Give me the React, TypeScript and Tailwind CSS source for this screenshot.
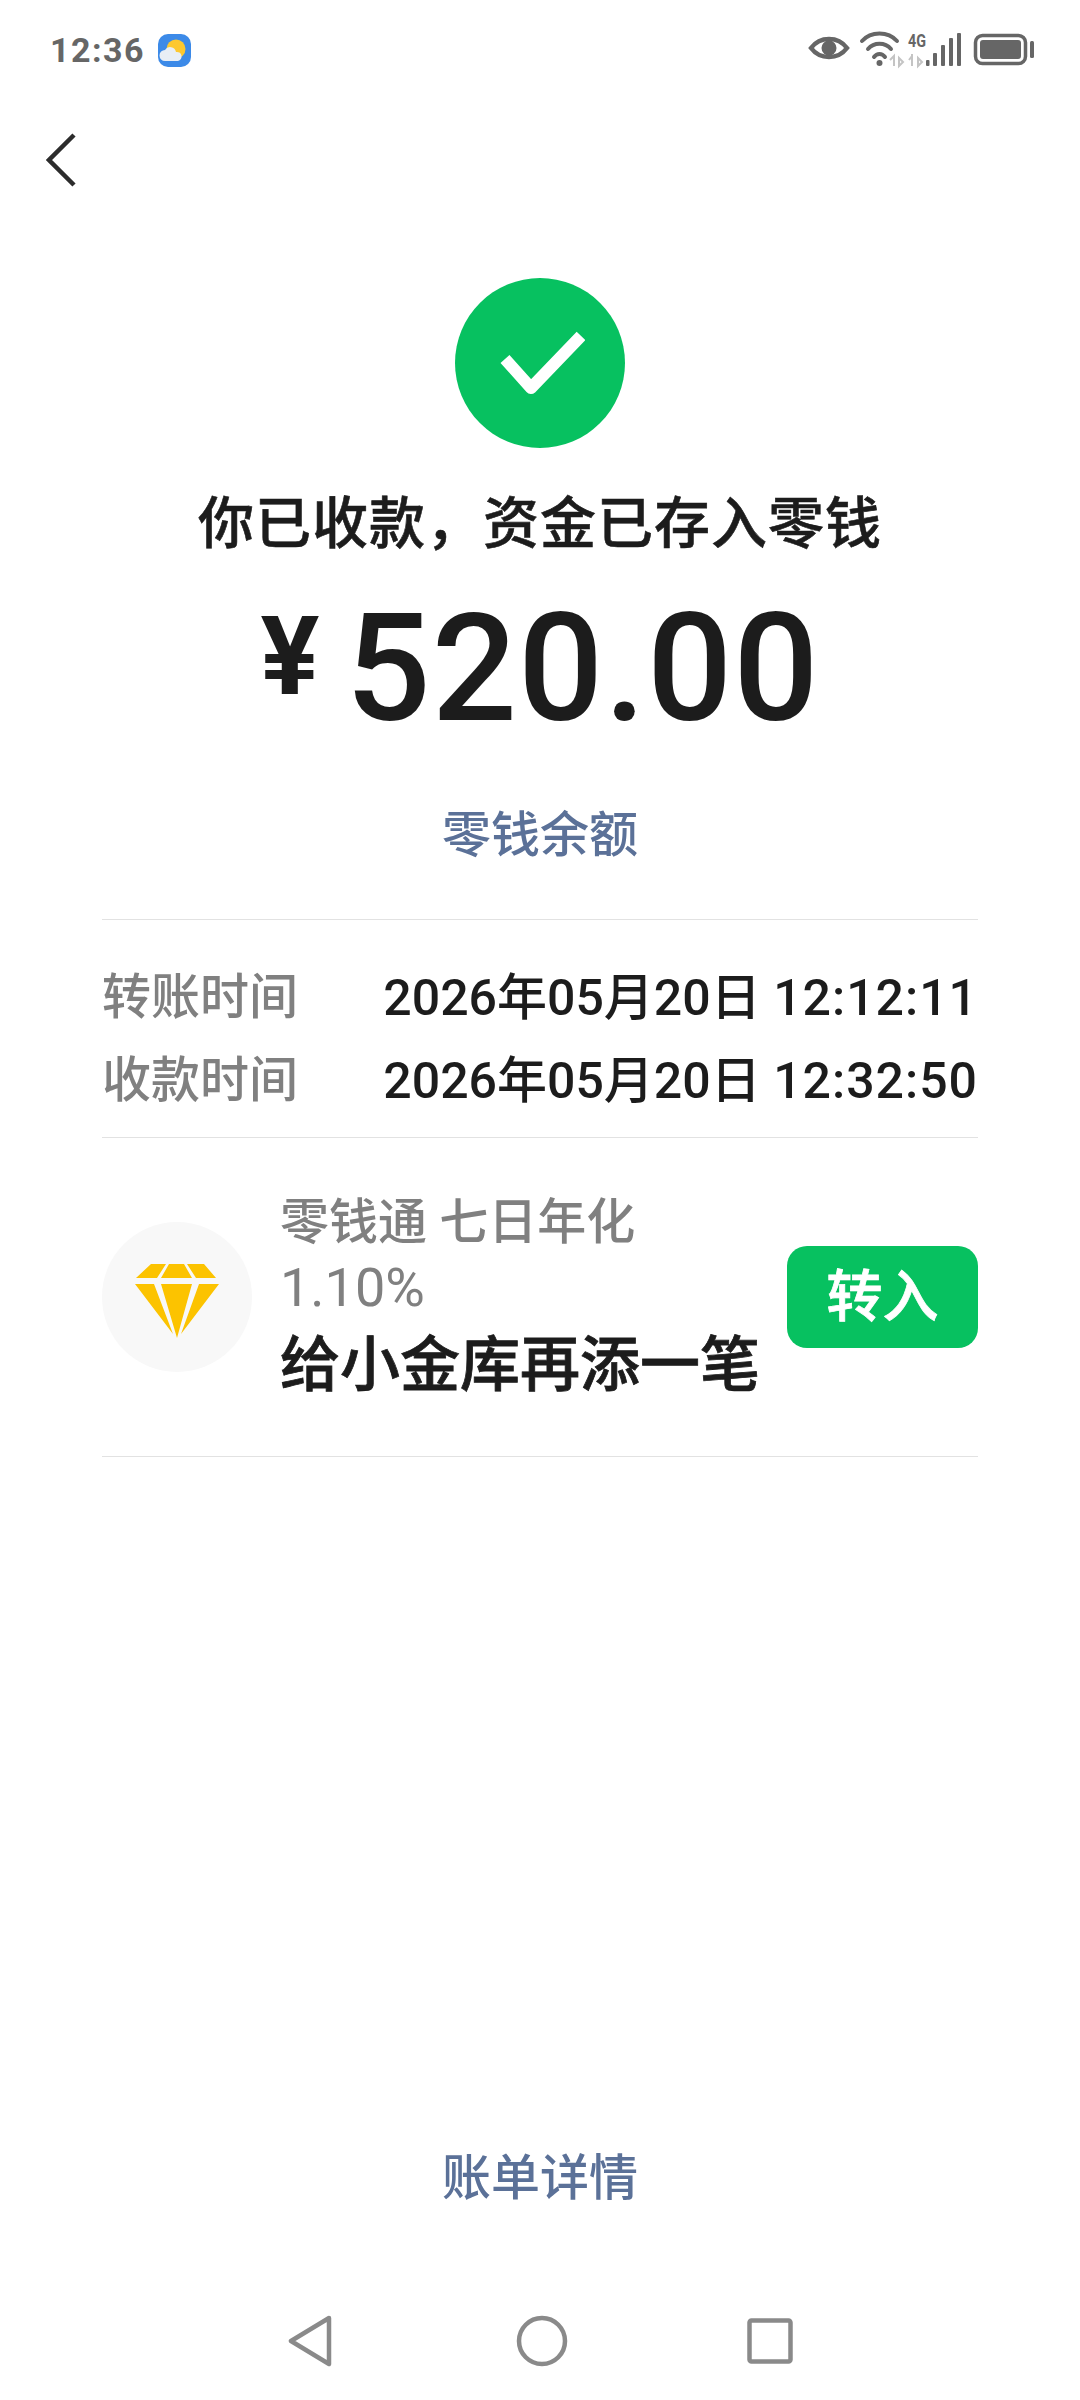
import React from "react";

const cjk = "font-['Roboto','Noto_Sans_CJK_SC',sans-serif]";

const StatusIcons = () => (
    <svg width="228" height="40" viewBox="0 0 228 40" fill="none">
        {/* eye */}
        <path d="M3 18 C12 6 30 6 39 18 C30 30 12 30 3 18 Z" stroke="#666" strokeWidth="4.5" />
        <circle cx="21" cy="18" r="7.5" fill="#666" />
        {/* wifi */}
        <path d="M54 11 C63 1 80 1 89 11" stroke="#666" strokeWidth="4" strokeLinecap="round" />
        <path d="M60 19 C66 12 77 12 83 19" stroke="#666" strokeWidth="4" strokeLinecap="round" />
        <path d="M66 27 C69 23 74 23 77 27" stroke="#666" strokeWidth="4" strokeLinecap="round" />
        <circle cx="71.5" cy="33" r="3" fill="#666" />
        <path d="M82 30 l4 -4 v10 M91 28 v8 l4 -4 z" stroke="#c4c4c4" strokeWidth="2" />
        {/* signal */}
        <text x="100" y="17" fill="#666" fontSize="18" fontWeight="700" fontFamily="Roboto" textLength="18" lengthAdjust="spacingAndGlyphs">4G</text>
        <path d="M104 26 l-3 4 M104 24 v12 M110 28 v8 l4 -4 z" stroke="#c4c4c4" strokeWidth="2" />
        <rect x="118" y="30" width="3.5" height="6" rx="1" fill="#666" />
        <rect x="125" y="23" width="4" height="13" rx="1" fill="#666" />
        <rect x="133" y="15" width="4" height="21" rx="1" fill="#666" />
        <rect x="141" y="8" width="4" height="28" rx="1" fill="#666" />
        <rect x="149" y="3" width="4" height="33" rx="1" fill="#666" />
        {/* battery */}
        <rect x="167.5" y="5.5" width="50" height="28" rx="7" stroke="#666" strokeWidth="3.5" />
        <rect x="172" y="10" width="41" height="19" rx="3" fill="#666" />
        <rect x="222" y="11" width="4" height="17" rx="1.5" fill="#666" />
    </svg>
);

const Diamond = () => (
    <svg width="84" height="74" viewBox="0 0 84 74" className="mt-[8px]">
        <path d="M16 0 H31 L22 14 H1 Z M34 0 H49 L57 14 H26 Z M52 0 H69 L81 14 H61 Z" fill="#fcc300" />
        <path d="M0 20 H19 L38 70 Z M26 20 H57 L42 74 Z M64 20 H84 L46 70 Z" fill="#fcc300" />
    </svg>
);

const TimeRow = ({ label, date, time }: { label: string; date: string; time: string }) => (
    <div className="flex h-[83px] items-center justify-between">
        <span className="text-[49px] leading-none font-medium text-[#808080]">{label}</span>
        <span className="text-[50px] leading-none font-medium whitespace-pre text-[#1c1c1c]">
            {date} <span className="tracking-[1px]">{time}</span>
        </span>
    </div>
);

export default function App() {
    return (
        <div className={`flex h-[2400px] w-[1080px] flex-col bg-white ${cjk}`}>
            {/* Status bar */}
            <div className="flex h-[100px] items-center justify-between pr-[44px] pl-[50px]">
                <div className="flex items-center gap-[13px]">
                    <span className="text-[34px] leading-none font-bold tracking-[1.5px] text-[#666]">12:36</span>
                    <svg width="33" height="33" viewBox="0 0 33 33">
                        <rect width="33" height="33" rx="10" fill="#3c8ae8" />
                        <circle cx="18" cy="15" r="9.5" fill="#fdc82f" />
                        <path d="M7 27 a5.5 5.5 0 0 1 0 -11 a6 6 0 0 1 11 2 a4.5 4.5 0 0 1 2 9 Z" fill="#e8eef5" />
                    </svg>
                </div>
                <StatusIcons />
            </div>

            {/* Back */}
            <div className="flex h-[120px] items-center pl-[46px]">
                <svg width="32" height="56" viewBox="0 0 32 56" fill="none">
                    <path d="M28 3 L3 28 L28 53" stroke="#2c2c2c" strokeWidth="4.5" />
                </svg>
            </div>

            {/* Result */}
            <div className="flex flex-col items-center pt-[58px]">
                <div className="flex h-[170px] w-[170px] items-center justify-center rounded-full bg-[#07c160]">
                    <svg width="90" height="72" viewBox="0 0 90 72" fill="none">
                        <path d="M10 32 L36 61 L86 9" stroke="#fff" strokeWidth="12" strokeLinejoin="round" />
                    </svg>
                </div>
                <div className="mt-[40px] text-[56px] leading-[72px] font-medium tracking-[1px] text-[#1c1c1c] [-webkit-text-stroke:0.6px_#1c1c1c]">
                    {"你已收款\uFF0C资金已存入零钱"}
                </div>
                <div className="mt-[34px] flex h-[150px] items-center text-[#1c1c1c]">
                    <span className="mr-[26px] mb-[24px] text-[110px] leading-none font-bold">¥</span>
                    <span className="text-[150px] leading-none font-medium tracking-[1px]">520.00</span>
                </div>
                <div className="mt-[57px] text-[49px] leading-[70px] font-medium text-[#5b7198]">零钱余额</div>
            </div>

            {/* Details */}
            <div className="mx-[102px] mt-[48px]">
                <div className="border-y border-[#e2e2e2] pt-[36px] pb-[15px]">
                    <TimeRow label="转账时间" date="2026年05月20日" time="12:12:11" />
                    <TimeRow label="收款时间" date="2026年05月20日" time="12:32:50" />
                </div>
                <div className="flex h-[319px] items-center border-b border-[#e2e2e2]">
                    <div className="flex h-[150px] w-[150px] shrink-0 items-center justify-center rounded-full bg-[#f8f8f8]">
                        <Diamond />
                    </div>
                    <div className="ml-[28px] flex-1">
                        <div className="text-[49px] leading-[66px] font-medium text-[#808080]">零钱通 七日年化</div>
                        <div className="text-[54px] leading-[64px] font-normal text-[#808080]">1.10%</div>
                        <div className="mt-[8px] text-[60px] leading-[76px] font-medium text-[#1c1c1c] [-webkit-text-stroke:0.8px_#1c1c1c]">给小金库再添一笔</div>
                    </div>
                    <div className="flex h-[102px] w-[191px] shrink-0 items-center justify-center rounded-[20px] bg-[#07c160] text-[56px] font-medium text-white [-webkit-text-stroke:0.8px_#fff]">
                        转入
                    </div>
                </div>
            </div>

            <div className="flex-1" />

            {/* Bill link */}
            <div className="text-center text-[49px] leading-[70px] font-medium text-[#5b7198]">账单详情</div>

            {/* Nav bar */}
            <div className="mt-[93px] flex h-[93px] items-start justify-center gap-[179px] pt-[8px]">
                <svg width="46" height="52" viewBox="0 0 46 52" fill="none" className="mr-[3px]">
                    <path d="M41 3 L3 26 L41 49 Z" stroke="#8a8a8a" strokeWidth="4.5" strokeLinejoin="round" />
                </svg>
                <svg width="52" height="52" viewBox="0 0 52 52" fill="none">
                    <circle cx="26" cy="26" r="23" stroke="#8a8a8a" strokeWidth="4.5" />
                </svg>
                <svg width="46" height="46" viewBox="0 0 46 46" fill="none" className="mt-[3px]">
                    <rect x="2.5" y="2.5" width="41" height="41" rx="2" stroke="#8a8a8a" strokeWidth="4.5" />
                </svg>
            </div>
        </div>
    );
}
